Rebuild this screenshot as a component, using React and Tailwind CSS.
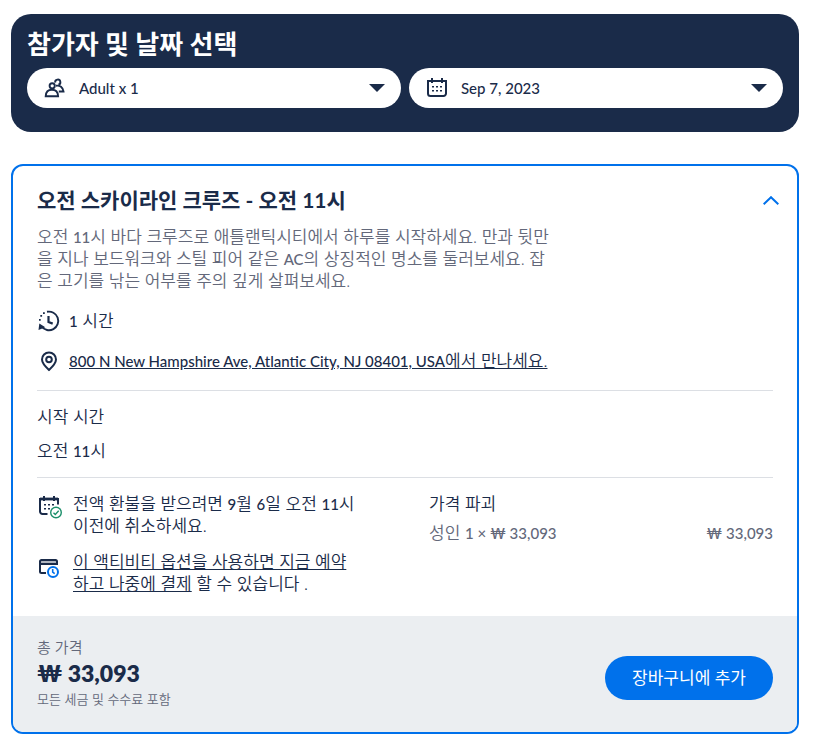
import { useState } from 'react';

const PeopleIcon = () => (
  <svg viewBox="0 0 24 24" className="h-6 w-6 shrink-0" fill="none" stroke="currentColor" strokeWidth="1.9" aria-hidden="true">
    <circle cx="9.2" cy="9.8" r="2.600" />
    <path d="M2.700 20.200c.2-4 2.700-6.400 6.200-6.400s6 2.400 6.200 6.400z" />
    <path d="M12.200 6.600a2.600 2.600 0 1 1 3.200 2.100" />
    <path d="M13 9.700c4-.6 6.900 1.600 7.500 5.800h-4.700" />
  </svg>
);

const CalendarIcon = () => (
  <svg viewBox="0 0 24 24" className="h-6 w-6 shrink-0" fill="none" stroke="currentColor" strokeWidth="2" aria-hidden="true">
    <path d="M3 5h18v12.500a2.500 2.500 0 0 1-2.500 2.500h-13A2.500 2.500 0 0 1 3 17.500z" />
    <path d="M7 2v5M17 2v5" />
    <path d="M7 10h2v1.500H7zM11 10h2v1.500h-2zM15 10h2v1.500h-2zM7 14h2v1.500H7zM11 14h2v1.500h-2zM15 14h2v1.500h-2z" fill="currentColor" stroke="none" />
  </svg>
);

const CaretDown = () => (
  <svg viewBox="0 0 16 8" className="h-2 w-4 shrink-0" fill="currentColor" aria-hidden="true">
    <path d="M0 0h16L8 8z" />
  </svg>
);

const ClockIcon = () => (
  <svg viewBox="0 0 24 24" className="h-6 w-6 shrink-0" fill="none" stroke="currentColor" strokeWidth="1.9" aria-hidden="true">
    <path d="M10 2.800a9.300 9.300 0 1 1-5.500 14.700" />
    <path d="M11.500 7v6l4.200 1.600" strokeWidth="2.200" />
    <path d="M1.500 21l.8-6.500 6 3.700z" fill="currentColor" stroke="none" />
    <path d="M6 3.300h1.800v1.800H6zM3.300 6h1.800v1.800H3.300zM2 10h1.700v1.800H2z" fill="currentColor" stroke="none" />
  </svg>
);

const PinIcon = () => (
  <svg viewBox="0 0 24 24" className="h-6 w-6 shrink-0" fill="none" stroke="currentColor" strokeWidth="2" aria-hidden="true">
    <path d="M12 21c-4.300-4-7-7-7-10.500a7 7 0 0 1 14 0c0 3.500-2.700 6.500-7 10.500z" />
    <circle cx="12" cy="10.500" r="2.800" />
  </svg>
);

const CalendarCheckIcon = () => (
  <svg viewBox="0 0 26 26" className="-mr-0.5 h-6.5 w-6.5 shrink-0" fill="none" stroke="currentColor" strokeWidth="2" aria-hidden="true">
    <path d="M21 11.500V6H3v12.500A2.500 2.500 0 0 0 5.500 21H10.500" />
    <path d="M3 6h18" strokeWidth="2.800" />
    <path d="M7 3v5M17 3v5" />
    <path d="M7 11h2v1.500H7zM11 11h2v1.500h-2zM15 11h2v1.500h-2zM7 15h2v1.500H7zM11 15h2v1.500h-2z" fill="currentColor" stroke="none" />
    <circle cx="19" cy="19.500" r="5.300" stroke="#1b8f6a" strokeWidth="1.400" />
    <path d="M16.500 19.700l1.800 1.700 3.400-3.600" stroke="#1b8f6a" strokeWidth="1.400" />
  </svg>
);

const CardClockIcon = () => (
  <svg viewBox="0 0 24 24" className="mt-1 h-6 w-6 shrink-0" fill="none" stroke="currentColor" strokeWidth="2" aria-hidden="true">
    <path d="M9 18H4.500A1.500 1.500 0 0 1 3 16.500v-10A1.500 1.500 0 0 1 4.500 5h14A1.500 1.500 0 0 1 20 6.500V10" />
    <path d="M3 9h17" />
    <path d="M4 7h15" opacity=".35" />
    <circle cx="16" cy="17" r="5" stroke="#0071eb" />
    <path d="M15.700 14v3.200l2 1.400" stroke="#0071eb" strokeWidth="1.600" />
  </svg>
);

// latin letters and digits run wide next to hangul, so they are set a size down
const Latin = ({ children }) => (
  <span className="text-[15px] leading-none font-medium">{children}</span>
);

const PickerField = ({ label, icon, options }) => {
  const [value, setValue] = useState(options[0]);

  return (
    <label className="flex h-10 items-center rounded-full bg-white px-4 text-[#1a2b49]">
      {icon}
      <select
        aria-label={label}
        value={value}
        onChange={(e) => setValue(e.target.value)}
        className="ml-3 h-6 min-w-0 flex-1 appearance-none bg-transparent text-[15px] leading-6 font-medium outline-none"
      >
        {options.map((option) => (
          <option key={option} value={option}>{option}</option>
        ))}
      </select>
      <CaretDown />
    </label>
  );
};

const App = () => {
  const [isOpen, setIsOpen] = useState(true);

  return (
    <main className="bg-white py-3.5 pr-[19px] pl-[11px] font-['Lato','Noto_Sans_CJK_KR',sans-serif] text-[17px] leading-[22px] font-[350] text-[#1a2b49]">
      <section className="rounded-[20px] bg-[#1a2b49] px-4 pt-3.5 pb-6">
        <h2 className="mb-2 text-[26px] leading-8 font-bold text-white">참가자 및 날짜 선택</h2>
        <div className="grid grid-cols-2 gap-2">
          <PickerField label="참가자" icon={<PeopleIcon />} options={['Adult x 1', 'Adult x 2']} />
          <PickerField label="날짜" icon={<CalendarIcon />} options={['Sep 7, 2023', 'Sep 8, 2023']} />
        </div>
      </section>

      <section className="mt-8 overflow-hidden rounded-xl border-2 border-[#0071eb]">
        <div className="px-6 pt-5 pb-[21px]">
          <div className="flex items-center justify-between">
            <h3 className="text-[21px] leading-7 font-bold">오전 스카이라인 크루즈 - 오전 11시</h3>
            <button
              type="button"
              aria-label="옵션 접기"
              aria-expanded={isOpen}
              onClick={() => setIsOpen(!isOpen)}
              className="-mr-2.5 flex h-6 w-6 items-center justify-center text-[#0071eb]"
            >
              <svg viewBox="0 0 16 9" className="h-[9px] w-4" fill="none" stroke="currentColor" strokeWidth="2" aria-hidden="true">
                <path d="M.7 8.200L8 1.200l7.300 7" />
              </svg>
            </button>
          </div>

          {isOpen && (
            <>
              <p className="mt-3 max-w-[520px] text-[#63687a]">
                오전 <Latin>11</Latin>시 바다 크루즈로 애틀랜틱시티에서 하루를 시작하세요. 만과 뒷만을 지나 보드워크와 스틸 피어 같은 <Latin>AC</Latin>의 상징적인 명소를 둘러보세요. 잡은 고기를 낚는 어부를 주의 깊게 살펴보세요.
              </p>

              <div className="mt-[17px] flex items-center gap-2">
                <ClockIcon />
                <span><Latin>1</Latin> 시간</span>
              </div>
              <div className="mt-4 flex items-center gap-2">
                <PinIcon />
                <a href="#meeting-point" className="underline">
                  <Latin>800 N New Hampshire Ave, Atlantic City, NJ 08401, USA</Latin>에서 만나세요.
                </a>
              </div>

              <div className="mt-[17px] border-t border-[#dcdfe4] pt-[15px]">
                <h4>시작 시간</h4>
                <p className="mt-3">오전 <Latin>11</Latin>시</p>
              </div>

              <div className="mt-[15px] grid grid-cols-2 gap-12 border-t border-[#dcdfe4] pt-[15px]">
                <div className="max-w-[320px]">
                  <div className="flex gap-3">
                    <CalendarCheckIcon />
                    <p>전액 환불을 받으려면 <Latin>9</Latin>월 <Latin>6</Latin>일 오전 <Latin>11</Latin>시 이전에 취소하세요.</p>
                  </div>
                  <div className="mt-3.5 flex gap-3">
                    <CardClockIcon />
                    <p>
                      <a href="#pay-later" className="underline">이 액티비티 옵션을 사용하면 지금 예약하고 나중에 결제</a> 할 수 있습니다 .
                    </p>
                  </div>
                </div>
                <div>
                  <h4>가격 파괴</h4>
                  <div className="mt-[7px] flex items-baseline justify-between text-[#63687a]">
                    <span>성인 <Latin>1 × ₩ 33,093</Latin></span>
                    <Latin>₩ 33,093</Latin>
                  </div>
                </div>
              </div>
            </>
          )}
        </div>

        <footer className="flex items-center justify-between bg-[#ebeef1] px-6 pt-[21px] pb-[23px]">
          <div>
            <p className="text-[15px] leading-5 text-[#63687a]">총 가격</p>
            <p className="text-[23px] leading-8 font-extrabold">₩ 33,093</p>
            <p className="text-[13px] leading-5 text-[#63687a]">모든 세금 및 수수료 포함</p>
          </div>
          <button type="button" className="mt-2.5 h-11 w-[168px] rounded-full bg-[#0071eb] font-normal text-white">
            장바구니에 추가
          </button>
        </footer>
      </section>
    </main>
  );
};

export default App;
